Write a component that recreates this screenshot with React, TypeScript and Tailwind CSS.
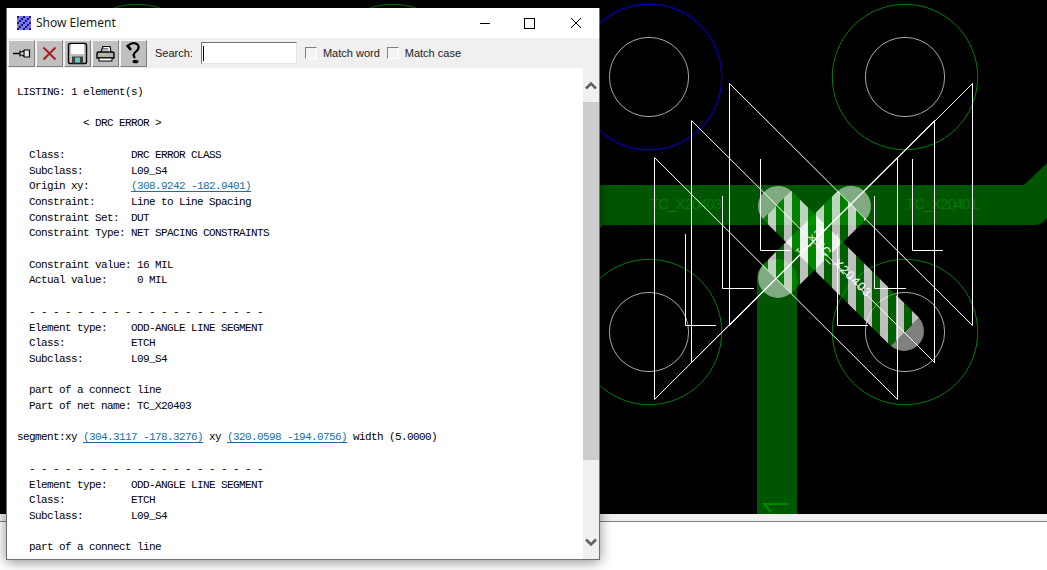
import React from 'react'

const pcbLabel = '"Liberation Sans", sans-serif'

const Link: React.FC<{ children: React.ReactNode }> = ({ children }) => (
    <span className="text-[#1c6ea4] underline underline-offset-2">{children}</span>
)

const Board: React.FC = () => {
    const pads = [137, 393, 649, 905]
    const bowties: [number, number, number, number][] = [
        [729.5, 972.5, 83.5, 325.5],
        [691.5, 934.5, 120.5, 362.5],
        [654.5, 897.5, 157.5, 399.5],
    ]
    const corners: [number, number, number, number][] = [
        [760.5, 159, 250.5, 791],
        [912.5, 159, 250.5, 943],
        [722.5, 196, 288.5, 754],
        [874.5, 196, 288.5, 906],
        [685.5, 234, 325.5, 716],
        [837.5, 234, 325.5, 868],
    ]

    return (
        <svg width="1047" height="514" viewBox="0 0 1047 514" className="block">
            <defs>
                <pattern id="hatch" patternUnits="userSpaceOnUse" x="784" y="0" width="16" height="16">
                    <rect x="0" y="0" width="8" height="16" fill="#ffffff" fillOpacity="0.75" />
                    <rect x="8" y="0" width="8" height="16" fill="#00a000" fillOpacity="0.6" />
                </pattern>
            </defs>

            {pads.map((x) => (
                <g key={x} fill="none">
                    <circle cx={x} cy="77" r="72.7" stroke={x === 649 ? '#0000a0' : '#007f00'} strokeWidth={x === 649 ? 1.4 : 1} />
                    <circle cx={x} cy="77" r="39.6" stroke="#a8a8a8" />
                </g>
            ))}
            {[649, 905].map((x) => (
                <g key={x} fill="none">
                    <circle cx={x} cy="332" r="72.7" stroke="#007f00" />
                    <circle cx={x} cy="332" r="39.6" stroke="#a8a8a8" />
                </g>
            ))}

            {/* traces */}
            <path d="M590 185H1024L1047 163V218Q1042 225 1034 225H603L598 230H590Z" fill="#005500" />
            <rect x="757" y="279" width="40" height="235" fill="#005500" />
            <circle cx="777" cy="279" r="20" fill="#005500" />
            <text x="650" y="209" fontFamily={pcbLabel} fontSize="15" fill="#007a00" textLength="72">TC_X20403</text>
            <text x="906" y="209" fontFamily={pcbLabel} fontSize="15" fill="#007a00" textLength="72">TC_X20401</text>
            <path d="M788 504H764L771 512" fill="none" stroke="#008800" strokeWidth="2" />

            {/* highlighted segments */}
            <line x1="777" y1="205" x2="905" y2="332" stroke="url(#hatch)" strokeWidth="40" />
            <line x1="852" y1="205" x2="777" y2="279" stroke="url(#hatch)" strokeWidth="40" />
            <path d="M791.1 190.9A20 20 0 0 0 762.9 219.1Z" fill="#ffffff" fillOpacity="0.5" />
            <path d="M837.9 190.9A20 20 0 0 1 866.1 219.1Z" fill="#ffffff" fillOpacity="0.5" />
            <path d="M791.1 293.1A20 20 0 0 1 762.9 264.9Z" fill="#ffffff" fillOpacity="0.5" />
            <path d="M919.1 317.9A20 20 0 0 1 890.9 346.1Z" fill="#ffffff" fillOpacity="0.5" />

            {/* clearance outlines */}
            {bowties.map(([l, r, t, b]) => (
                <path key={l} d={`M${l} ${b}V${t}L${r} ${b}V${t}L${l} ${b}`} fill="none" stroke="#ffffff" />
            ))}
            {corners.map(([x, t, b, r]) => (
                <path key={x} d={`M${x} ${t}V${b}H${r}`} fill="none" stroke="#ffffff" />
            ))}

            <text x="814" y="245" transform="rotate(45 814 245)" fontFamily={pcbLabel} fontSize="12" fill="#ffffff" textLength="74">TC_X20403</text>
            <text x="799" y="255" transform="rotate(-45 799 255)" fontFamily={pcbLabel} fontSize="8" fill="#ffffff" textLength="36">TC_X20</text>
        </svg>
    )
}

const ToolButton: React.FC<{ children: React.ReactNode }> = ({ children }) => (
    <div className="flex h-[27px] w-[27px] items-center justify-center border border-t-[#f4f4f4] border-l-[#f4f4f4] border-r-[#808080] border-b-[#808080] bg-[#c0c0c0]">
        {children}
    </div>
)

const PinIcon = () => (
    <svg width="21" height="17" viewBox="0 0 21 17">
        <path d="M2 8.5H9" stroke="#000" strokeWidth="1.4" />
        <path d="M9 5.5V11.5M9 7H11L13 5.5V11.5L11 10H9M13 5H18.5V12H13" fill="#e8e8e8" stroke="#000" strokeWidth="1.2" />
    </svg>
)

const CloseIcon = () => (
    <svg width="15" height="15" viewBox="0 0 15 15">
        <path d="M1.5 1.5L13.5 13.5M13.5 1.5L1.5 13.5" stroke="#a82020" strokeWidth="2" />
    </svg>
)

const SaveIcon = () => (
    <svg width="21" height="23" viewBox="0 0 21 23">
        <path d="M1.5 3Q1.5 1.5 3 1.5H18Q19.5 1.5 19.5 3V20Q19.5 21.5 18 21.5H3Q1.5 21.5 1.5 20Z" fill="#c0c0c0" stroke="#000" strokeWidth="1.4" />
        <rect x="4" y="2" width="13" height="10" fill="#ffffff" />
        <rect x="5" y="14.5" width="11" height="7" fill="#404040" />
        <rect x="8" y="15.5" width="5" height="5" fill="#5fc8c8" />
    </svg>
)

const PrintIcon = () => (
    <svg width="19" height="17" viewBox="0 0 19 17">
        <path d="M5 7L7 1.5H14L15 7" fill="#ffffff" stroke="#000" strokeWidth="1.2" />
        <path d="M1 8.5Q1 7 3 7H16Q18 7 18 8.5V13H1Z" fill="#b0b0b0" stroke="#000" strokeWidth="1.4" />
        <rect x="3" y="13" width="13" height="3" fill="#ffffff" stroke="#000" />
        <path d="M5 9.5H10" stroke="#e0e000" />
        <path d="M7 3.5H12M6.5 5H12.5" stroke="#707070" />
    </svg>
)

const HelpIcon = () => (
    <svg width="17" height="24" viewBox="0 0 17 24">
        <path d="M3 5C5 2 10 1 13 4C15 7 12 10 9.5 12C8 14 9 16 10 17" fill="none" stroke="#000" strokeWidth="2.2" />
        <path d="M2 4L6 9" stroke="#000" strokeWidth="2.8" />
        <ellipse cx="10.5" cy="20.5" rx="3" ry="1.8" fill="#000" />
    </svg>
)

const WindowGlyphs = () => (
    <div className="flex items-center">
        <svg width="12" height="12" viewBox="0 0 12 12" className="mr-[33px]"><path d="M1 6.5H11" stroke="#000" /></svg>
        <div className="mr-[35px] h-[11px] w-[11px] border border-black" />
        <svg width="12" height="12" viewBox="0 0 12 12"><path d="M1 1L11 11M11 1L1 11" stroke="#000" /></svg>
    </div>
)

const AppIcon = () => {
    const cells = Array.from({ length: 49 }, (_, i) => (i * i + (i % 5) * 3) % 3)
    return (
        <svg width="14" height="14" viewBox="0 0 14 14">
            <rect width="14" height="14" fill="#ffffff" />
            {cells.map((c, i) => (
                <rect
                    key={i}
                    x={(i % 7) * 2}
                    y={Math.floor(i / 7) * 2}
                    width="2"
                    height="2"
                    fill={c === 0 ? '#1414a0' : c === 1 ? '#7a7ad8' : '#ffffff'}
                />
            ))}
        </svg>
    )
}

const Check: React.FC<{ label: string }> = ({ label }) => (
    <span className="flex items-center gap-[6px]">
        <span className="h-[12px] w-[12px] border border-t-[#808080] border-l-[#808080] border-r-[#ffffff] border-b-[#ffffff] bg-[#f4f4f4]" />
        <span>{label}</span>
    </span>
)

const ShowElement: React.FC = () => (
    <div className="absolute left-[6px] top-[8px] flex h-[552px] w-[594px] flex-col overflow-hidden border-x border-b border-[#707070] bg-white shadow-[0_2px_12px_rgba(0,0,0,0.45)]">
        <div className="flex h-[30px] shrink-0 items-center justify-between bg-white pl-[10px] pr-[17px]">
            <div className="flex items-center gap-[5px] text-[12px] text-[#202020] font-['Noto_Sans',sans-serif]">
                <AppIcon />
                <span>Show Element</span>
            </div>
            <WindowGlyphs />
        </div>

        <div className="flex h-[30px] shrink-0 items-center bg-[#f0f0f0] pl-[1px] text-[11px] text-[#202020] font-['Liberation_Sans',sans-serif]">
            <div className="flex gap-[1px]">
                <ToolButton><PinIcon /></ToolButton>
                <ToolButton><CloseIcon /></ToolButton>
                <ToolButton><SaveIcon /></ToolButton>
                <ToolButton><PrintIcon /></ToolButton>
                <ToolButton><HelpIcon /></ToolButton>
            </div>
            <span className="ml-[8px]">Search:</span>
            <div className="ml-[8px] flex h-[22px] w-[96px] items-center border border-t-[#707070] border-l-[#707070] border-r-[#e4e4e4] border-b-[#e4e4e4] bg-white pl-[1px]">
                <div className="h-[15px] w-[1px] bg-black" />
            </div>
            <div className="ml-[8px] flex gap-[7px]">
                <Check label="Match word" />
                <Check label="Match case" />
            </div>
        </div>

        <div className="flex min-h-0 flex-1">
            <pre className="min-w-0 flex-1 overflow-hidden bg-white pl-[10px] pt-[17px] text-[11px] leading-[15.7px] tracking-[-0.6px] text-black font-['Liberation_Mono',monospace]">
{`LISTING: 1 element(s)

           < DRC ERROR >

  Class:           DRC ERROR CLASS
  Subclass:        L09_S4
  Origin xy:       `}<Link>(308.9242 -182.9401)</Link>{`
  Constraint:      Line to Line Spacing
  Constraint Set:  DUT
  Constraint Type: NET SPACING CONSTRAINTS

  Constraint value: 16 MIL
  Actual value:     0 MIL

  - - - - - - - - - - - - - - - - - - - -
  Element type:    ODD-ANGLE LINE SEGMENT
  Class:           ETCH
  Subclass:        L09_S4

  part of a connect line
  Part of net name: TC_X20403

segment:xy `}<Link>(304.3117 -178.3276)</Link>{` xy `}<Link>(320.0598 -194.0756)</Link>{` width (5.0000)

  - - - - - - - - - - - - - - - - - - - -
  Element type:    ODD-ANGLE LINE SEGMENT
  Class:           ETCH
  Subclass:        L09_S4

  part of a connect line`}
            </pre>

            <div className="flex w-[16px] shrink-0 flex-col bg-[#f0f0f0]">
                <div className="flex h-[34px] shrink-0 items-center justify-center">
                    <svg width="12" height="9" viewBox="0 0 12 9"><path d="M1 7.5L6 2.5L11 7.5" fill="none" stroke="#606060" strokeWidth="2.6" /></svg>
                </div>
                <div className="h-[358px] bg-[#cdcdcd]" />
                <div className="flex-1" />
                <div className="flex h-[34px] shrink-0 items-center justify-center">
                    <svg width="12" height="9" viewBox="0 0 12 9"><path d="M1 1.5L6 6.5L11 1.5" fill="none" stroke="#606060" strokeWidth="2.6" /></svg>
                </div>
            </div>
        </div>
    </div>
)

export default function App() {
    return (
        <div className="relative h-[570px] w-[1047px] overflow-hidden bg-white">
            <div className="h-[514px] bg-black">
                <Board />
            </div>
            <div className="h-[7px] bg-[#f0f0f0]" />
            <div className="h-[1px] bg-[#808080]" />
            <ShowElement />
        </div>
    )
}
